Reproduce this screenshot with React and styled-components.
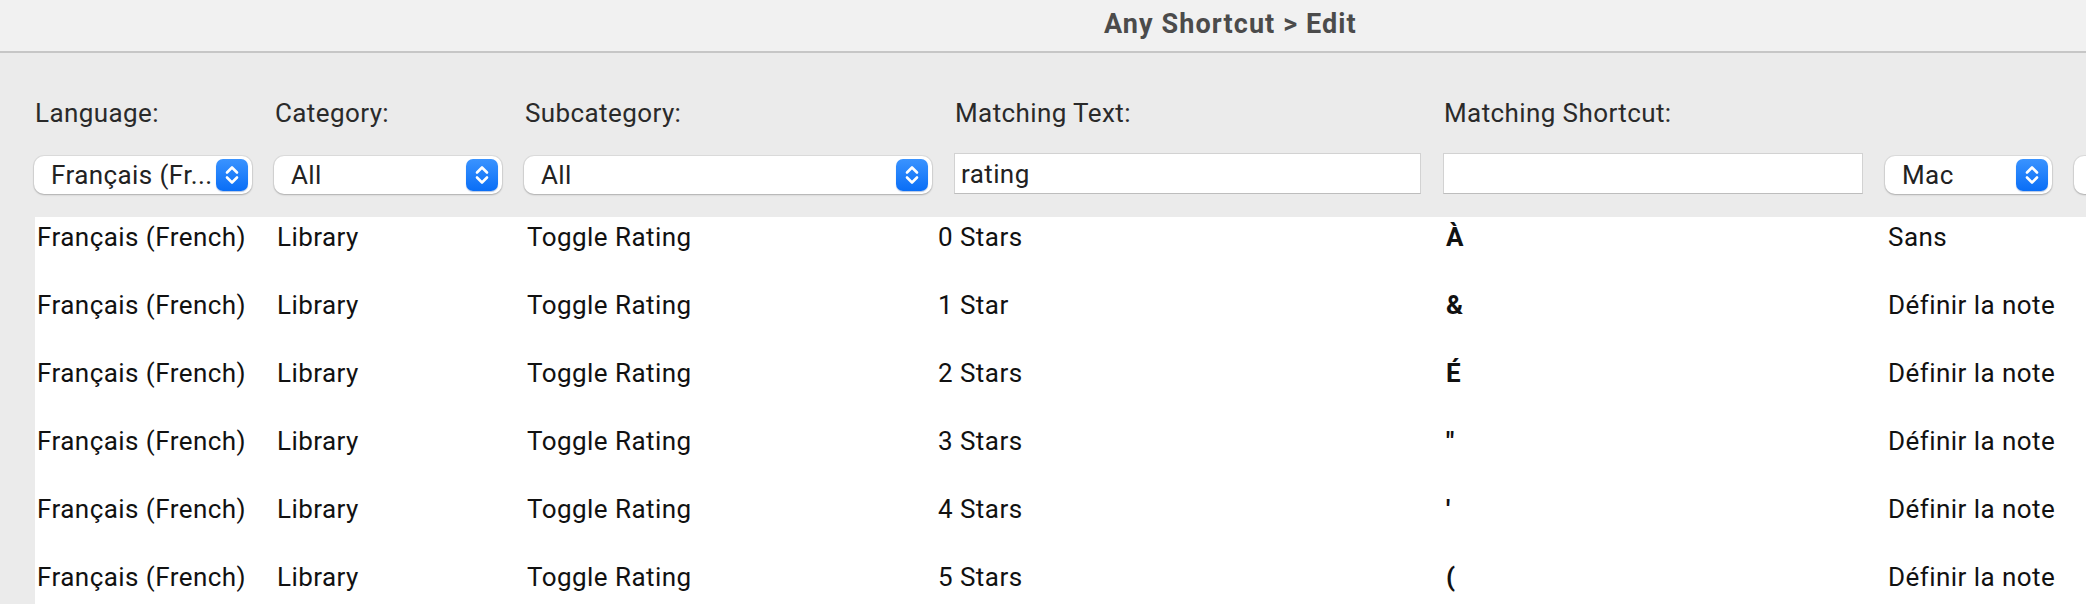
import React from 'react';
import styled, { createGlobalStyle } from 'styled-components';

const GlobalStyle = createGlobalStyle`
  html, body {
    margin: 0;
    padding: 0;
    width: 2086px;
    height: 604px;
    overflow: hidden;
    background: #ebebeb;
  }
  * {
    box-sizing: border-box;
  }
`;

const rows = [
  { text: '0 Stars', key: 'À', action: 'Sans' },
  { text: '1 Star', key: '&', action: 'Définir la note' },
  { text: '2 Stars', key: 'É', action: 'Définir la note' },
  { text: '3 Stars', key: '"', action: 'Définir la note' },
  { text: '4 Stars', key: "'", action: 'Définir la note' },
  { text: '5 Stars', key: '(', action: 'Définir la note' },
];

const Stepper = () => (
  <StepperBox>
    <svg width="32" height="32" viewBox="0 0 32 32">
      <path
        d="M11 13.5 L16 8.5 L21 13.5 M11 18.5 L16 23.5 L21 18.5"
        fill="none"
        stroke="#fff"
        strokeWidth="2.6"
        strokeLinecap="round"
        strokeLinejoin="round"
      />
    </svg>
  </StepperBox>
);

const Popup = ({ width, children }) => (
  <PopupButton width={width}>
    <PopupLabel>{children}</PopupLabel>
    <Stepper />
  </PopupButton>
);

export default function App() {
  return (
    <Window>
      <GlobalStyle />
      <TitleBar>
        <Title>Any Shortcut &gt; Edit</Title>
      </TitleBar>
      <Filters>
        <FilterColumn width={218}>
          <FilterLabel>Language:</FilterLabel>
          <Popup width={218}>Français (Fr...</Popup>
        </FilterColumn>
        <FilterColumn width={228}>
          <FilterLabel>Category:</FilterLabel>
          <Popup width={228}>All</Popup>
        </FilterColumn>
        <FilterColumn width={408}>
          <FilterLabel>Subcategory:</FilterLabel>
          <Popup width={408}>All</Popup>
        </FilterColumn>
        <FilterColumn width={467}>
          <FilterLabel>Matching Text:</FilterLabel>
          <TextField width={467} defaultValue="rating" />
        </FilterColumn>
        <FilterColumn width={420}>
          <FilterLabel>Matching Shortcut:</FilterLabel>
          <TextField width={420} defaultValue="" />
        </FilterColumn>
        <FilterColumn width={167}>
          <FilterLabel>&nbsp;</FilterLabel>
          <Popup width={167}>Mac</Popup>
        </FilterColumn>
        <FilterColumn width={140}>
          <FilterLabel>&nbsp;</FilterLabel>
          <Popup width={140} />
        </FilterColumn>
      </Filters>
      <Table>
        <TableBody>
          {rows.map((row) => (
            <Row key={row.text}>
              <Cell width={240}>Français (French)</Cell>
              <Cell width={250}>Library</Cell>
              <Cell width={411}>Toggle Rating</Cell>
              <Cell width={508}>{row.text}</Cell>
              <Cell width={442} bold>
                {row.key}
              </Cell>
              <Cell>{row.action}</Cell>
            </Row>
          ))}
        </TableBody>
      </Table>
    </Window>
  );
}

const Window = styled.div`
  width: 2086px;
  height: 604px;
  overflow: hidden;
  background: #ebebeb;
  font-family: Roboto, 'Liberation Sans', sans-serif;
  display: flex;
  flex-direction: column;
`;

const TitleBar = styled.div`
  height: 53px;
  flex: none;
  background: #f1f1f1;
  border-bottom: 2px solid #c6c6c6;
  display: flex;
  align-items: center;
  padding-left: 1104px;
`;

const Title = styled.div`
  font-size: 27px;
  font-weight: 700;
  letter-spacing: 1.1px;
  color: #4b4b4b;
  margin-top: -4px;
`;

const Filters = styled.div`
  display: flex;
  gap: 22px;
  padding: 45px 0 0 34px;
  height: 164px;
  flex: none;
  white-space: nowrap;
`;

const FilterColumn = styled.div`
  width: ${(props) => props.width}px;
  flex: none;
  display: flex;
  flex-direction: column;
`;

const FilterLabel = styled.div`
  font-size: 26px;
  letter-spacing: 0.4px;
  color: #2a2a2a;
  height: 30px;
  line-height: 30px;
  margin-bottom: 28px;
  padding-left: 1px;
`;

const PopupButton = styled.div`
  width: ${(props) => props.width}px;
  height: 38px;
  background: #fff;
  border-radius: 10px;
  box-shadow: 0 0 0 1px rgba(0, 0, 0, 0.06), 0 1px 2px rgba(0, 0, 0, 0.22);
  display: flex;
  align-items: center;
  justify-content: space-between;
  padding: 0 4px 0 17px;
`;

const PopupLabel = styled.span`
  font-size: 26px;
  letter-spacing: 0.4px;
  color: #222;
  overflow: hidden;
`;

const StepperBox = styled.div`
  width: 32px;
  height: 32px;
  flex: none;
  border-radius: 7px;
  background: linear-gradient(#3a93ff, #0a6ef6);
  box-shadow: 0 1px 1px rgba(0, 60, 160, 0.3);
  display: flex;
`;

const TextField = styled.input`
  width: ${(props) => props.width}px;
  height: 41px;
  margin-top: -3px;
  border: 1px solid #d2d2d2;
  border-bottom-color: #bdbdbd;
  border-radius: 0;
  background: #fff;
  font-family: Roboto, 'Liberation Sans', sans-serif;
  font-size: 26px;
  letter-spacing: 0.4px;
  color: #222;
  padding: 0 0 0 6px;
  outline: none;
`;

const Table = styled.div`
  flex: 1;
  margin-left: 35px;
  background: #fff;
  overflow: hidden;
`;

const TableBody = styled.div`
  margin-top: -14px;
`;

const Row = styled.div`
  display: flex;
  height: 68px;
  align-items: center;
  white-space: nowrap;
`;

const Cell = styled.div`
  width: ${(props) => (props.width ? `${props.width}px` : 'auto')};
  flex: ${(props) => (props.width ? 'none' : '1')};
  padding-left: 2px;
  font-size: 26px;
  letter-spacing: 0.45px;
  font-weight: ${(props) => (props.bold ? 700 : 400)};
  color: #111;
`;
